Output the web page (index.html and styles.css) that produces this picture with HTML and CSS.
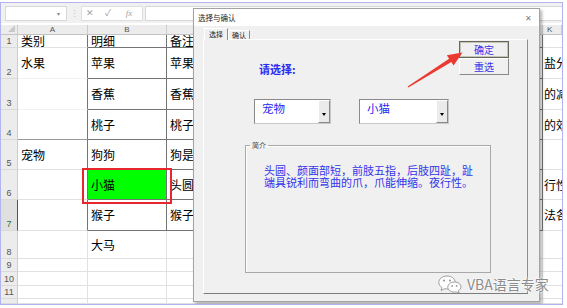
FILE: index.html
```html
<!DOCTYPE html>
<html lang="zh-CN">
<head>
    <meta charset="UTF-8">
    <meta name="viewport" content="width=device-width, initial-scale=1.0">
    <title>选择与确认</title>
    <link rel="stylesheet" href="styles.css">
</head>
<body>

<div class="screen">
    <div class="formula-bar">
        <div class="name-box"><span class="caret">▾</span></div>
        <span class="grip">⋮</span>
        <div class="fx-buttons"><span>✕</span><span>✓</span><span class="fx">fx</span></div>
        <div class="formula-input"></div>
    </div>

    <div class="sheet">
        <div class="corner"></div>
        <div class="col-head">A</div>
        <div class="col-head">B</div>
        <div class="col-head">C</div>
        <div class="col-head left">K</div>

        <div class="row-num">1</div>
        <div class="cell edge">类别</div>
        <div class="cell boxed">明细</div>
        <div class="cell boxed">备注</div>
        <div class="cell tail"></div>

        <div class="row-num">2</div>
        <div class="cell edge plain">水果</div>
        <div class="cell boxed">苹果</div>
        <div class="cell boxed">苹果营养丰富</div>
        <div class="cell tail">盐分</div>

        <div class="row-num">3</div>
        <div class="cell edge plain"></div>
        <div class="cell boxed">香蕉</div>
        <div class="cell boxed">香蕉含钾高</div>
        <div class="cell tail">的减</div>

        <div class="row-num">4</div>
        <div class="cell edge group-end"></div>
        <div class="cell boxed">桃子</div>
        <div class="cell boxed">桃子含铁高</div>
        <div class="cell tail">的效</div>

        <div class="row-num">5</div>
        <div class="cell edge">宠物</div>
        <div class="cell boxed">狗狗</div>
        <div class="cell boxed">狗是由狼驯化</div>
        <div class="cell tail"></div>

        <div class="row-num">6</div>
        <div class="cell edge"></div>
        <div class="cell boxed picked">小猫</div>
        <div class="cell boxed">头圆、颜面部</div>
        <div class="cell tail">行性</div>

        <div class="row-num active">7</div>
        <div class="cell edge"></div>
        <div class="cell boxed">猴子</div>
        <div class="cell boxed">猴子很聪明</div>
        <div class="cell tail">法各</div>

        <div class="row-num">8</div>
        <div class="cell"></div>
        <div class="cell">大马</div>
        <div class="cell"></div>
        <div class="cell tail"></div>

        <div class="row-num">9</div>
        <div class="cell"></div><div class="cell"></div><div class="cell"></div><div class="cell tail"></div>
        <div class="row-num">10</div>
        <div class="cell"></div><div class="cell"></div><div class="cell"></div><div class="cell tail"></div>
        <div class="row-num">11</div>
        <div class="cell"></div><div class="cell"></div><div class="cell"></div><div class="cell tail"></div>
        <div class="row-num"></div>
        <div class="cell"></div><div class="cell"></div><div class="cell"></div><div class="cell tail"></div>
    </div>

    <div class="dialog">
        <div class="title-bar">
            <span>选择与确认</span>
            <span class="close">✕</span>
        </div>
        <div class="dialog-body">
            <div class="tabs">
                <div class="tab current">选择</div>
                <div class="tab">确认</div>
            </div>
            <div class="panel">
                <div class="top-row">
                    <div class="prompt">请选择:</div>
                    <div class="buttons">
                        <button type="button" class="btn btn-default">确定</button>
                        <button type="button" class="btn">重选</button>
                    </div>
                </div>
                <div class="combos">
                    <div class="combo first">
                        <div class="combo-value">宠物</div>
                        <div class="combo-drop"></div>
                    </div>
                    <div class="combo second">
                        <div class="combo-value">小猫</div>
                        <div class="combo-drop"></div>
                    </div>
                </div>
                <fieldset class="frame">
                    <legend>简介</legend>
                    <div class="intro">头圆、颜面部短，前肢五指，后肢四趾，趾端具锐利而弯曲的爪，爪能伸缩。夜行性。</div>
                </fieldset>
            </div>
        </div>
    </div>

    <div class="mark"></div>

    <svg class="arrow" viewBox="1 3 561 301" width="561" height="301">
        <polygon points="407.6,86.5 408.4,87.5 451.3,62.1 453.6,65.6 462.5,52.6 446.8,55.2 449.1,58.7" fill="#ea3a32"/>
    </svg>

    <div class="watermark">
        <svg width="24" height="18" viewBox="0 0 24 18">
            <path d="M9 1 C4.2 1 0.8 3.9 0.8 7.5 C0.8 9.6 2 11.4 3.9 12.6 L3.2 15.6 L6.6 13.7 C7.4 13.9 8.2 14 9 14 C13.8 14 17.2 11.1 17.2 7.5 C17.2 3.9 13.8 1 9 1 Z" fill="#fff" stroke="#9d9d9d" stroke-width="1"/>
            <circle cx="6" cy="5.6" r="1.1" fill="#9d9d9d"/>
            <circle cx="12" cy="5.6" r="1.1" fill="#9d9d9d"/>
            <path d="M16.4 7 C12.6 7 9.8 9.3 9.8 12.1 C9.8 14.9 12.6 17.1 16.4 17.1 C17 17.1 17.6 17 18.2 16.9 L21.2 17.8 L20.4 15.6 C22 14.6 23 13.4 23 12.1 C23 9.3 20.2 7 16.4 7 Z" fill="#fff" stroke="#9d9d9d" stroke-width="1"/>
            <circle cx="14.2" cy="11" r="0.9" fill="#9d9d9d"/>
            <circle cx="18.6" cy="11" r="0.9" fill="#9d9d9d"/>
        </svg>
        <span>VBA语言专家</span>
    </div>
</div>

</body>
</html>
```

FILE: styles.css
```css
* {
    box-sizing: border-box;
}
body {
    margin: 0;
    background: #fff;
    font-family: "Noto Sans CJK SC", "Noto Sans", sans-serif;
}
.screen {
    position: relative;
    width: 563px;
    height: 303px;
    margin-top: 2px;
    border: 1px solid #b3b3f0;
    background: #fff;
    overflow: hidden;
}

/* excel formula bar */
.formula-bar {
    display: flex;
    align-items: center;
    height: 20px;
    padding-left: 4px;
    background: #f1f1f1;
}
.name-box {
    width: 62px;
    height: 15px;
    background: #fff;
    border: 1px solid #d8d8d8;
    display: flex;
    align-items: center;
    justify-content: flex-end;
    padding-right: 6px;
}
.caret {
    font-size: 6px;
    color: #888;
}
.grip {
    width: 14px;
    text-align: center;
    font-size: 9px;
    color: #c4c4c4;
}
.fx-buttons {
    width: 62px;
    height: 15px;
    display: grid;
    grid-template-columns: 16px 20px 22px;
    align-items: center;
    justify-items: center;
    background: #fff;
    border: 1px solid #dedede;
    font-size: 9px;
    line-height: 12px;
    color: #a3a3a3;
}
.fx {
    font-family: "Liberation Serif", serif;
    font-style: italic;
}
.formula-input {
    flex: 1;
    height: 15px;
    margin-left: 2px;
    background: #fff;
    border: 1px solid #d8d8d8;
    border-right: none;
}

/* sheet grid */
.sheet {
    display: grid;
    grid-template-columns: 17px 70px 79px 376px 1fr;
    grid-template-rows: 10px 13px 31px 31px 30px 30px 30px 31px 28px 13px 14px 13px 1fr;
    height: 279px;
    margin-top: 2px;
    font-size: 12px;
    color: #000;
}
.corner,
.col-head,
.row-num {
    background: #ececec;
    border-right: 1px solid #cdcdcd;
    border-bottom: 1px solid #c2c2c2;
    font-family: "Liberation Sans", sans-serif;
    font-size: 8px;
    color: #555;
}
.corner {
    position: relative;
}
.corner::after {
    content: "";
    position: absolute;
    right: 2px;
    bottom: 2px;
    border-left: 7px solid transparent;
    border-bottom: 7px solid #c9c9c9;
}
.col-head {
    display: flex;
    align-items: center;
    justify-content: center;
    line-height: 9px;
}
.col-head.left {
    justify-content: flex-start;
    padding-left: 4px;
}
.row-num {
    display: flex;
    align-items: flex-end;
    justify-content: center;
    padding-bottom: 1px;
    font-size: 9px;
    line-height: 10px;
    border-bottom-color: #dadada;
}
.row-num.active {
    background: #e0e0e0;
    color: #217346;
    border-right: 1px solid #217346;
}
.cell {
    display: flex;
    align-items: center;
    padding-left: 3px;
    line-height: 12px;
    white-space: nowrap;
    border-right: 1px solid #e1e1e1;
    border-bottom: 1px solid #e1e1e1;
}
.cell.edge {
    border-right-color: #747474;
}
.cell.plain {
    border-bottom-color: #f2f2f2;
}
.cell.group-end {
    border-bottom-color: #9a9a9a;
}
.cell.boxed {
    border-right-color: #747474;
    border-bottom-color: #747474;
}
.cell.picked {
    background: #00ff00;
}
.cell.tail {
    padding-left: 1px;
    border-right: none;
    overflow: hidden;
}

/* user form */
.dialog {
    position: absolute;
    left: 192px;
    top: 5px;
    width: 347px;
    height: 294px;
    display: flex;
    flex-direction: column;
    background: #f0f0f0;
    border: 1px solid #a3a3a3;
    box-shadow: 2px 2px 3px rgba(0, 0, 0, 0.3);
}
.title-bar {
    height: 17px;
    display: flex;
    align-items: center;
    justify-content: space-between;
    padding: 0 7px 0 4px;
    background: #fff;
    font-size: 7.5px;
    line-height: 10px;
    color: #222;
}
.close {
    font-size: 8px;
    color: #7a7a7a;
}
.dialog-body {
    flex: 1;
    display: flex;
    flex-direction: column;
    padding: 2px 11px 7px 9px;
}
.tabs {
    display: flex;
    align-items: flex-end;
    height: 11px;
    padding-left: 1px;
}
.tab {
    height: 9px;
    padding: 0 3px;
    border: 1px solid;
    border-color: #fff #8d8d8d transparent #fff;
    border-bottom: none;
    font-size: 7px;
    line-height: 8px;
    color: #222;
}
.tab.current {
    position: relative;
    height: 12px;
    margin-bottom: -1px;
    padding: 0 4px;
    background: #f0f0f0;
    line-height: 10px;
}
.panel {
    flex: 1;
    border: 1px solid;
    border-color: #fff #8d8d8d #7d7d7d #fff;
}
.top-row {
    display: flex;
    height: 59px;
    padding: 1px 18px 0 55px;
}
.prompt {
    margin-top: 22px;
    font-size: 11px;
    line-height: 13px;
    font-weight: bold;
    color: #2a2af5;
}
.buttons {
    margin-left: auto;
    display: flex;
    flex-direction: column;
}
.btn {
    width: 50px;
    height: 17px;
    padding: 0;
    font: 10px/13px "Noto Sans CJK SC", sans-serif;
    color: #3535e8;
    background: #f0f0f0;
    border: 1px solid;
    border-color: #fff #8a8a8a #8a8a8a #fff;
}
.btn-default {
    border: 1px solid #66665a;
    box-shadow: inset 0 0 0 1px #c5c5b5;
}
.combos {
    display: flex;
    gap: 28px;
    padding-left: 50px;
}
.combo {
    display: flex;
    height: 25px;
    background: #fff;
    border: 1px solid;
    border-color: #8a8a8a #c8c8c8 #c8c8c8 #8a8a8a;
}
.combo.first {
    width: 77px;
}
.combo.second {
    width: 90px;
}
.combo-value {
    flex: 1;
    padding: 2px 0 0 7px;
    font-size: 11.5px;
    line-height: 13px;
    color: #2a2af0;
}
.combo-drop {
    width: 12px;
    display: flex;
    justify-content: center;
    padding-top: 12px;
    background: #ebebeb;
    border: 1px solid;
    border-color: #fff #8a8a8a #8a8a8a #fff;
}
.combo-drop::after {
    content: "";
    width: 0;
    height: 0;
    border-left: 2px solid transparent;
    border-right: 2px solid transparent;
    border-top: 3px solid #000;
}
.frame {
    width: 246px;
    height: 132px;
    min-width: 0;
    margin: 17px 0 0 41px;
    padding: 15px 0 0 4px;
    border: 1px solid #a8a8a8;
    box-shadow: inset 1px 1px 0 #fff;
}
.frame legend {
    padding: 0 2px;
    font-size: 7px;
    line-height: 8px;
    color: #444;
}
.intro {
    width: 212px;
    margin-left: 14px;
    font-size: 11px;
    line-height: 12px;
    color: #3434ea;
}

/* annotations laid over the screenshot */
.mark {
    position: absolute;
    left: 81px;
    top: 165px;
    width: 90px;
    height: 36px;
    border: 2px solid #e8262e;
}
.arrow {
    position: absolute;
    left: 0;
    top: 0;
    pointer-events: none;
}
.watermark {
    position: absolute;
    left: 437px;
    top: 272px;
    display: flex;
    align-items: center;
    gap: 5px;
    font-size: 14px;
    line-height: 18px;
    color: #8b8b8b;
    text-shadow: 0 0 2px #fff, 0 0 2px #fff, 0 0 1px #fff;
}
```
